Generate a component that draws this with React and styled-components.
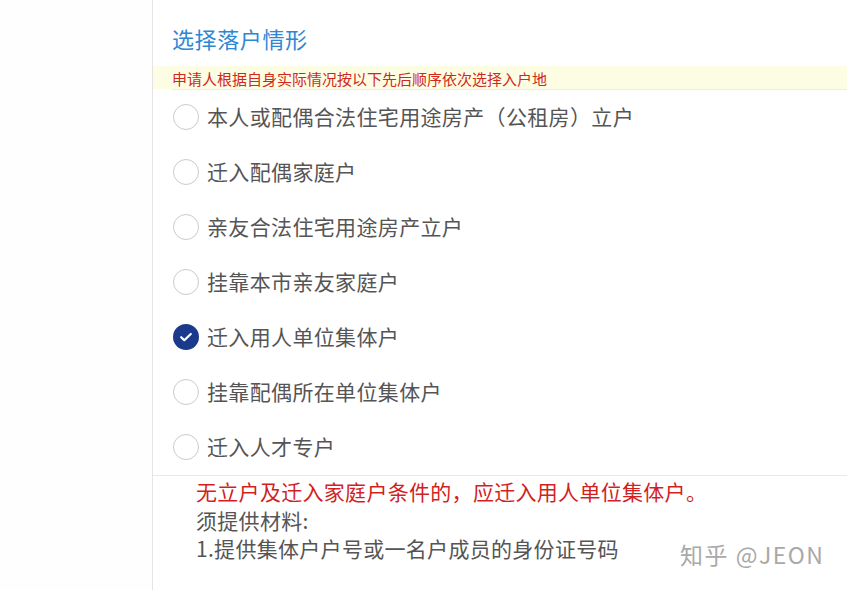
import React from "react";
import styled, { createGlobalStyle } from "styled-components";

const GlobalStyle = createGlobalStyle`
  html, body {
    margin: 0;
    padding: 0;
    background: #ffffff;
  }
  body {
    font-family: "Noto Sans CJK SC", "Noto Sans", sans-serif;
  }
`;

const Page = styled.div`
  position: relative;
  display: flex;
  width: 847px;
  height: 590px;
  overflow: hidden;
  background: #fff;
`;

const Gutter = styled.div`
  width: 152px;
  flex-shrink: 0;
  background: #fefefe;
`;

const Main = styled.div`
  flex: 1;
  border-left: 1px solid #e4e4e4;
  display: flex;
  flex-direction: column;
`;

const Title = styled.h2`
  margin: 0;
  padding: 24px 0 0 19px;
  height: 42px;
  font-size: 22px;
  line-height: 28px;
  font-weight: 400;
  letter-spacing: 0.6px;
  color: #2e87d3;
`;

const Notice = styled.div`
  height: 23px;
  background: #fdfde3;
  padding-left: 19px;
  font-size: 15px;
  line-height: 25px;
  color: #d0281f;
`;

const Options = styled.div`
  margin-left: 19px;
  border-top: 1px solid #ececec;
  display: flex;
  flex-direction: column;
`;

const Row = styled.label`
  height: 55px;
  display: flex;
  align-items: center;
  gap: 8px;
  font-size: 21px;
  line-height: 26px;
  letter-spacing: 0.35px;
  color: #555;
`;

const Label = styled.span`
  margin-top: -3px;
`;

const Radio = styled.span`
  width: 26px;
  height: 26px;
  box-sizing: border-box;
  border-radius: 50%;
  display: flex;
  align-items: center;
  justify-content: center;
  margin-left: 1px;
  margin-top: -2px;
  border: ${(p) => (p.$checked ? "none" : "1.5px solid #cbcbcb")};
  background: ${(p) => (p.$checked ? "#1b3a8c" : "#fff")};
`;

const Divider = styled.div`
  border-top: 1px solid #e8e8e8;
`;

const Details = styled.div`
  padding: 1px 0 0 43px;
  font-size: 21px;
  line-height: 28.5px;
  letter-spacing: 0.3px;
  color: #555;
`;

const Line = styled.div`
  color: ${(p) => (p.$warn ? "#d21f1f" : "#555")};
`;

const Watermark = styled.div`
  position: absolute;
  left: 680px;
  top: 539px;
  font-size: 23px;
  line-height: 30px;
  letter-spacing: 1.5px;
  color: #a9a9a9;
  text-shadow: 1px 1px 0 #fff;
`;

const options = [
  "本人或配偶合法住宅用途房产（公租房）立户",
  "迁入配偶家庭户",
  "亲友合法住宅用途房产立户",
  "挂靠本市亲友家庭户",
  "迁入用人单位集体户",
  "挂靠配偶所在单位集体户",
  "迁入人才专户",
];

const Check = () => (
  <svg width="16" height="16" viewBox="0 0 16 16">
    <path
      d="M3.2 8.2l3.1 3L12.8 5"
      fill="none"
      stroke="#fff"
      strokeWidth="2.2"
      strokeLinecap="round"
      strokeLinejoin="round"
    />
  </svg>
);

const App = () => {
  const selected = 4;
  return (
    <Page>
      <GlobalStyle />
      <Gutter />
      <Main>
        <Title>选择落户情形</Title>
        <Notice>申请人根据自身实际情况按以下先后顺序依次选择入户地</Notice>
        <Options>
          {options.map((text, i) => (
            <Row key={text}>
              <Radio $checked={i === selected}>
                {i === selected && <Check />}
              </Radio>
              <Label>{text}</Label>
            </Row>
          ))}
        </Options>
        <Divider />
        <Details>
          <Line $warn>无立户及迁入家庭户条件的，应迁入用人单位集体户。</Line>
          <Line>须提供材料:</Line>
          <Line>1.提供集体户户号或一名户成员的身份证号码</Line>
        </Details>
      </Main>
      <Watermark>知乎 @JEON</Watermark>
    </Page>
  );
};

export default App;
